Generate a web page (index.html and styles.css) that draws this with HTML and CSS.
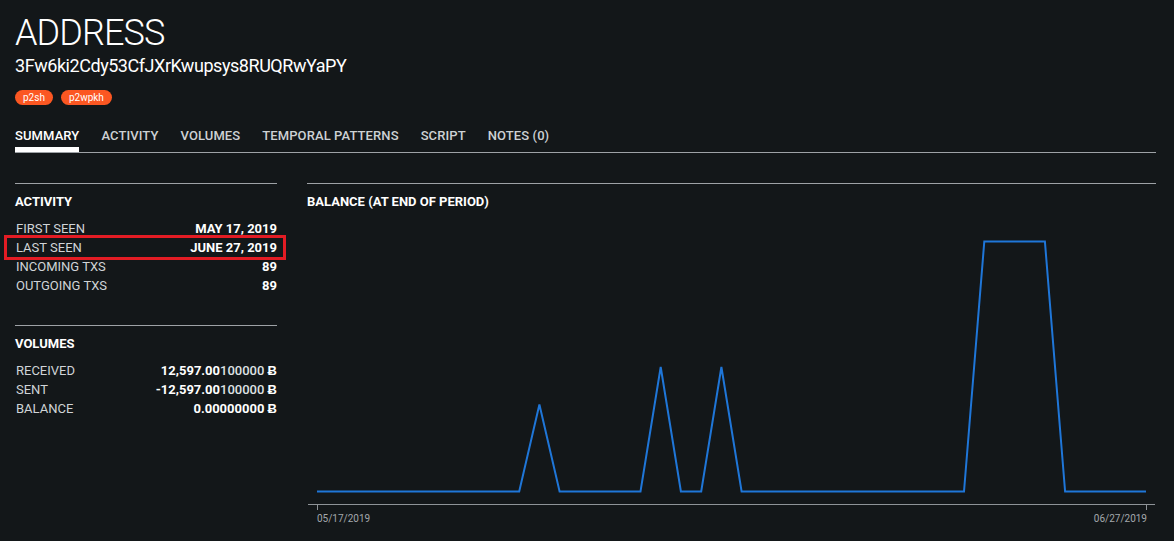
FILE: index.html
```html
<!DOCTYPE html>
<html lang="en">
<head>
  <meta charset="UTF-8" />
  <title>Address 3Fw6ki2Cdy53CfJXrKwupsys8RUQRwYaPY</title>
  <link rel="stylesheet" href="styles.css">
</head>
<body>
  <h1 class="title">ADDRESS</h1>
  <div class="address">3Fw6ki2Cdy53CfJXrKwupsys8RUQRwYaPY</div>

  <div class="badges">
    <span class="badge">p2sh</span>
    <span class="badge">p2wpkh</span>
  </div>

  <nav class="tabs">
    <a class="tab active">SUMMARY</a>
    <a class="tab">ACTIVITY</a>
    <a class="tab">VOLUMES</a>
    <a class="tab">TEMPORAL PATTERNS</a>
    <a class="tab">SCRIPT</a>
    <a class="tab">NOTES (0)</a>
  </nav>

  <div class="summary">
    <div class="side">
      <section class="panel">
        <h3>ACTIVITY</h3>
        <div class="row"><span>FIRST SEEN</span><b>MAY 17, 2019</b></div>
        <div class="row marked"><span>LAST SEEN</span><b>JUNE 27, 2019</b></div>
        <div class="row"><span>INCOMING TXS</span><b>89</b></div>
        <div class="row"><span>OUTGOING TXS</span><b>89</b></div>
      </section>

      <section class="panel">
        <h3>VOLUMES</h3>
        <div class="row"><span>RECEIVED</span><b>12,597.00<i>100000</i> Ƀ</b></div>
        <div class="row"><span>SENT</span><b>-12,597.00<i>100000</i> Ƀ</b></div>
        <div class="row"><span>BALANCE</span><b>0.00000000 Ƀ</b></div>
      </section>
    </div>

    <section class="panel chart">
      <h3>BALANCE (AT END OF PERIOD)</h3>
      <svg class="plot" width="849" height="330" viewBox="0 0 849 330">
        <!-- daily balance, one step per day -->
        <polyline class="series" points="10,281.5 212.2,281.5 232.4,194.5 252.6,281.5 333.5,281.5 353.7,157 373.9,281.5 394.2,281.5 414.4,157 434.6,281.5 657,281.5 677.3,31.5 737.9,31.5 758.1,281.5 839,281.5" />
        <line class="axis" x1="1" y1="294.5" x2="848" y2="294.5" />
        <line class="axis" x1="10.5" y1="294.5" x2="10.5" y2="300" />
        <line class="axis" x1="839.5" y1="294.5" x2="839.5" y2="300" />
        <text class="tick" x="10" y="312">05/17/2019</text>
        <text class="tick" x="840" y="312" text-anchor="end">06/27/2019</text>
      </svg>
    </section>
  </div>
</body>
</html>
```

FILE: styles.css
```css
body {
  margin: 0;
  padding: 12px 18px 0 15px;
  background-color: #131719;
  color: #fff;
  font-family: Roboto, "Liberation Sans", sans-serif;
  overflow: hidden;
}

.title {
  margin: 0;
  font-size: 36px;
  line-height: 42px;
  font-weight: 300;
  letter-spacing: -0.9px;
}

.address {
  margin-top: 1px;
  font-size: 18px;
  line-height: 22px;
  letter-spacing: -0.45px;
}

.badges {
  display: flex;
  gap: 8px;
  margin-top: 13px;
}

.badge {
  background-color: #fb5722;
  color: #fff;
  font-size: 10px;
  line-height: 15px;
  padding: 0 8px;
  border-radius: 8px;
}

.tabs {
  display: flex;
  gap: 22px;
  margin-top: 23px;
  border-bottom: 1px solid #9ea2a6;
}

.tab {
  font-size: 13px;
  line-height: 16px;
  font-weight: 500;
  letter-spacing: 0.1px;
  color: #cdd1d4;
  padding-bottom: 3px;
  border-bottom: 5px solid transparent;
}

.tab.active {
  color: #fff;
  border-bottom-color: #fff;
}

.summary {
  display: flex;
  gap: 30px;
  margin-top: 30px;
}

.side {
  width: 262px;
  display: flex;
  flex-direction: column;
  gap: 30px;
}

.panel {
  border-top: 1px solid #9ea2a6;
  padding-top: 10px;
}

.panel h3 {
  margin: 0 0 9px;
  font-size: 13px;
  line-height: 16px;
  font-weight: 700;
}

.row {
  position: relative;
  display: flex;
  justify-content: space-between;
  font-size: 13px;
  line-height: 19px;
  padding-left: 1px;
}

.row span {
  color: #d0d4d7;
}

.row b {
  font-weight: 700;
}

.row i {
  font-style: normal;
  font-weight: 500;
  color: #dfe2e4;
}

/* red frame drawn round the highlighted row */
.row.marked::after {
  content: "";
  position: absolute;
  top: -3px;
  bottom: -3px;
  left: -11px;
  right: -9px;
  border: 3px solid #e31c24;
}

.chart {
  flex: 1;
}

.chart h3 {
  margin-bottom: 0;
}

.plot {
  display: block;
}

.series {
  fill: none;
  stroke: #1f76d8;
  stroke-width: 2;
  stroke-linejoin: miter;
}

.axis {
  stroke: #8e9397;
  stroke-width: 1;
}

.tick {
  fill: #a3a8ac;
  font-size: 10px;
  font-family: Roboto, "Liberation Sans", sans-serif;
}
```
